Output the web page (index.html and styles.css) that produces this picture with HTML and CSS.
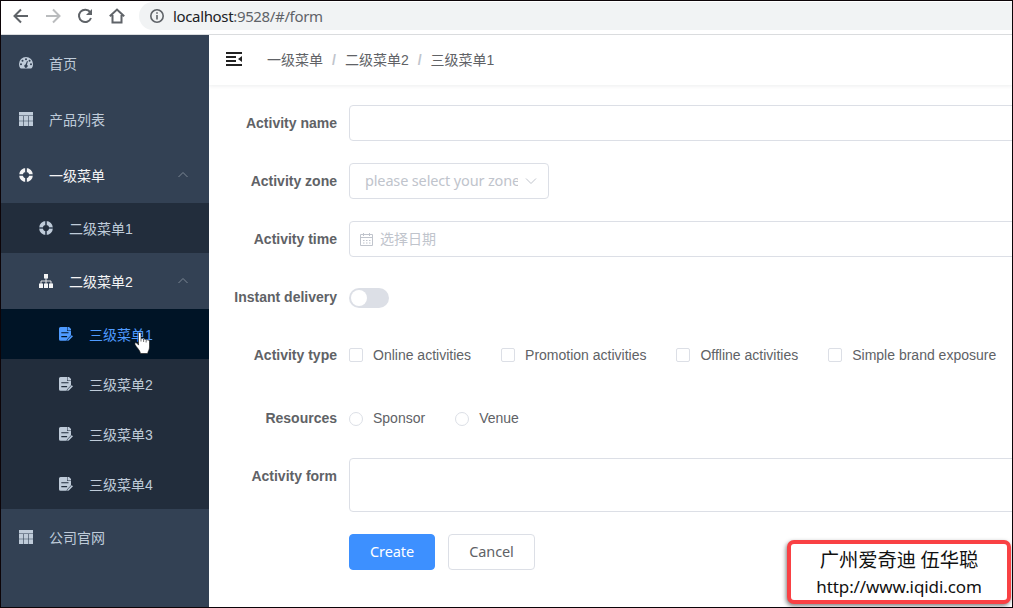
FILE: index.html
```html
<!DOCTYPE html>
<html lang="zh-CN">
<head>
    <meta charset="UTF-8">
    <meta name="viewport" content="width=device-width, initial-scale=1.0">
    <title>三级菜单1</title>
    <link rel="stylesheet" href="styles.css">
</head>
<body>

<!-- Icons -->
<svg class="icon-defs" width="0" height="0">
    <symbol id="icon-dashboard" viewBox="0 0 14 14">
        <path fill="currentColor" fill-rule="evenodd" d="M7 1a7 7 0 0 0-7 7c0 1.500.4 2.900 1.100 4.100.2.300.5.500.9.500h10c.4 0 .7-.2.900-.5A7.500 7.500 0 0 0 14 8a7 7 0 0 0-7-7zM2 7.200a1 1 0 1 1 0 2 1 1 0 0 1 0-2zM3.500 3.700a1 1 0 1 1 0 2 1 1 0 0 1 0-2zM7 2.200a1 1 0 1 1 0 2 1 1 0 0 1 0-2zM8 5l.9.300-1 3.500a1.600 1.600 0 1 1-1.400-.2zM10.600 3.700a1 1 0 1 1 0 2 1 1 0 0 1 0-2zM12 7.200a1 1 0 1 1 0 2 1 1 0 0 1 0-2z"/>
    </symbol>
    <symbol id="icon-table" viewBox="0 0 14 14">
        <path fill="currentColor" d="M0 0h14v3.500H0zM0 4h4.400v4.700H0zM5 4h4v4.700H5zM9.600 4H14v4.700H9.600zM0 9.200h4.400V14H0zM5 9.200h4V14H5zM9.600 9.200H14V14H9.600z"/>
    </symbol>
    <symbol id="icon-guide" viewBox="0 0 14 14">
        <circle cx="7" cy="7" r="5" fill="none" stroke="currentColor" stroke-width="3.800"/>
        <path class="guide-gap" d="M7 0v4M7 10v4M0 7h4M10 7h4"/>
    </symbol>
    <symbol id="icon-tree" viewBox="0 0 14 14">
        <path fill="currentColor" d="M5 0h4v4.500H5zM0 9.500h4V14H0zM5 9.500h4V14H5zM10 9.500h4V14h-4z"/>
        <path fill="none" stroke="currentColor" stroke-width=".9" d="M7 4v6M2 10V7h10v3"/>
    </symbol>
    <symbol id="icon-form" viewBox="0 0 14 14">
        <path fill="currentColor" fill-rule="evenodd" d="M1.500 0H8v4h4v4.300L8 12.600l-.4 1.200H1.500A1.500 1.500 0 0 1 0 12.300V1.500A1.500 1.500 0 0 1 1.500 0zM2.300 5.200v1h7.200v-1zM2.300 9v1.200h5.800V9z"/>
        <path fill="currentColor" d="M8.500 0H10l2 2v1.500H8.500zM12.700 8.200l1.300 1-4.200 4.400-1.600.4.400-1.500z"/>
    </symbol>
    <symbol id="icon-arrow-up" viewBox="0 0 12 12">
        <path fill="none" stroke="currentColor" d="M1.500 8L6 3.500 10.500 8"/>
    </symbol>
</svg>

<div class="window">
    <!-- Browser bar -->
    <div class="browser-bar">
        <svg class="browser-icon" viewBox="0 0 16 16"><path d="M15 8H2M8 1.500L1.500 8 8 14.500"/></svg>
        <svg class="browser-icon disabled" viewBox="0 0 16 16"><path d="M1 8h13M8 1.500L14.500 8 8 14.500"/></svg>
        <svg class="browser-icon" viewBox="0 0 16 16"><path d="M13.200 4.200A6.200 6.200 0 1 0 14 10"/><path class="solid" d="M15 1v6H9z"/></svg>
        <svg class="browser-icon" viewBox="0 0 16 16"><path d="M.8 8.200L8 1.500l7.200 6.700M3.500 7v7.500h9V7"/></svg>
        <div class="address">
            <svg class="info-icon" viewBox="0 0 14 14"><circle cx="7" cy="7" r="6.200"/><path d="M7 6v4.500M7 3.300v1.500"/></svg>
            <span class="host">localhost</span><span>:9528/#/form</span>
        </div>
    </div>

    <div class="app">
        <!-- Sidebar -->
        <div class="sidebar">
            <a class="menu-item"><svg class="menu-icon"><use href="#icon-dashboard"/></svg><span>首页</span></a>
            <a class="menu-item"><svg class="menu-icon"><use href="#icon-table"/></svg><span>产品列表</span></a>
            <a class="menu-item opened"><svg class="menu-icon"><use href="#icon-guide"/></svg><span>一级菜单</span><svg class="arrow"><use href="#icon-arrow-up"/></svg></a>
            <div class="submenu">
                <a class="menu-item level-2"><svg class="menu-icon"><use href="#icon-guide"/></svg><span>二级菜单1</span></a>
                <a class="menu-item level-2 opened"><svg class="menu-icon"><use href="#icon-tree"/></svg><span>二级菜单2</span><svg class="arrow"><use href="#icon-arrow-up"/></svg></a>
                <a class="menu-item level-3 active"><svg class="menu-icon"><use href="#icon-form"/></svg><span>三级菜单1</span></a>
                <a class="menu-item level-3"><svg class="menu-icon"><use href="#icon-form"/></svg><span>三级菜单2</span></a>
                <a class="menu-item level-3"><svg class="menu-icon"><use href="#icon-form"/></svg><span>三级菜单3</span></a>
                <a class="menu-item level-3"><svg class="menu-icon"><use href="#icon-form"/></svg><span>三级菜单4</span></a>
            </div>
            <a class="menu-item"><svg class="menu-icon"><use href="#icon-table"/></svg><span>公司官网</span></a>
        </div>

        <div class="main">
            <!-- Navbar -->
            <div class="navbar">
                <svg class="hamburger" viewBox="0 0 16 14"><path d="M0 0h16v2H0zM0 4h10v2H0zM0 8h10v2H0zM0 12h16v2H0zM16 4v6l-4-3z"/></svg>
                <div class="breadcrumb">
                    <span>一级菜单</span><i>/</i><span>二级菜单2</span><i>/</i><span>三级菜单1</span>
                </div>
            </div>

            <!-- Form -->
            <div class="form">
                <div class="form-item">
                    <label>Activity name</label>
                    <div class="input"></div>
                </div>
                <div class="form-item">
                    <label>Activity zone</label>
                    <div class="input select"><span class="placeholder">please select your zone</span><svg class="select-arrow" viewBox="0 0 12 12"><path d="M1 3.500l5 5 5-5"/></svg></div>
                </div>
                <div class="form-item">
                    <label>Activity time</label>
                    <div class="input date">
                        <svg class="calendar" viewBox="0 0 13 13"><path d="M.5 1.500h12v11H.5zM.5 4.500h12M3.500 0v3M9.500 0v3M3 7.500h1.500M6 7.500h1.500M9 7.500h1.500M3 10h1.500M6 10h1.500M9 10h1.500"/></svg>
                        <span>选择日期</span>
                    </div>
                </div>
                <div class="form-item">
                    <label>Instant delivery</label>
                    <div class="switch"><div class="knob"></div></div>
                </div>
                <div class="form-item type-item">
                    <label>Activity type</label>
                    <div class="options">
                        <span class="option"><i class="checkbox"></i>Online activities</span>
                        <span class="option"><i class="checkbox"></i>Promotion activities</span>
                        <span class="option"><i class="checkbox"></i>Offline activities</span>
                        <span class="option"><i class="checkbox"></i>Simple brand exposure</span>
                    </div>
                </div>
                <div class="form-item">
                    <label>Resources</label>
                    <div class="options">
                        <span class="option"><i class="radio"></i>Sponsor</span>
                        <span class="option"><i class="radio"></i>Venue</span>
                    </div>
                </div>
                <div class="form-item">
                    <label>Activity form</label>
                    <div class="input textarea"></div>
                </div>
                <div class="form-buttons">
                    <button class="btn primary">Create</button>
                    <button class="btn">Cancel</button>
                </div>
            </div>
        </div>
    </div>

    <!-- Mouse pointer over the active item -->
    <svg class="pointer" viewBox="0 0 17 23"><path d="M4.500 1.500c0-1.300 2.500-1.300 2.500 0V7c.4-1 2.500-.8 2.600.5.500-1 2.400-.7 2.500.7.600-.8 3.400-.4 3.400 1V15c0 3-1.500 4-1.800 6.500H6.500C6 18 2.500 15.500 1 12.500c-.7-1.600 1-2.300 2-1.200l1.500 1.800z"/><path class="folds" d="M7 7v2.500M9.600 7.500V10M12.100 8.500V10.500"/></svg>

    <!-- Signature -->
    <div class="signature">
        <div class="author">广州爱奇迪 伍华聪</div>
        <div class="site">http://www.iqidi.com</div>
    </div>
</div>

</body>
</html>
```
FILE: styles.css
```css
* {
    box-sizing: border-box;
}

body {
    margin: 0;
    font-family: "Liberation Sans", "Noto Sans CJK SC", sans-serif;
    font-size: 14px;
    color: #606266;
    background-color: #fff;
}

.icon-defs {
    display: block;
}

.window {
    position: relative;
    display: flex;
    flex-direction: column;
    width: 1013px;
    height: 608px;
    border: 1px solid #0c0408;
    overflow: hidden;
}

/* Browser bar */
.browser-bar {
    display: flex;
    align-items: center;
    flex: none;
    gap: 16px;
    height: 34px;
    padding: 0 0 3px 12px;
    border-bottom: 1px solid #dadcde;
}

.browser-icon {
    width: 16px;
    height: 16px;
    fill: none;
    stroke: #5f6368;
    stroke-width: 2;
}

.browser-icon.disabled {
    stroke: #babcbe;
}

.browser-icon .solid {
    fill: #5f6368;
    stroke: none;
}

.address {
    display: flex;
    align-items: center;
    flex: 1;
    height: 28px;
    margin-left: -2px;
    padding: 0 0 1px 11px;
    border-radius: 14px 0 0 14px;
    background-color: #f1f3f4;
    font-family: "Noto Sans", sans-serif;
    font-size: 15px;
    letter-spacing: -0.35px;
    color: #5f6368;
}

.address .host {
    color: #202124;
}

.info-icon {
    width: 14px;
    height: 14px;
    margin-right: 9px;
    fill: none;
    stroke: #5f6368;
    stroke-width: 1.6;
}

.app {
    display: flex;
    flex: 1;
    min-height: 0;
}

/* Sidebar */
.sidebar {
    flex: none;
    width: 208px;
    background-color: #334154;
}

.menu-item {
    display: flex;
    align-items: center;
    height: 56px;
    padding: 0 20px 0 18px;
    color: #bfcbd9;
    cursor: pointer;
}

.menu-item span {
    padding-bottom: 1px;
}

.menu-icon {
    flex: none;
    width: 14px;
    height: 14px;
    margin-right: 16px;
}

.guide-gap {
    stroke: #334154;
    stroke-width: 1.7;
}

.submenu {
    background-color: #222d3c;
}

.submenu .menu-item {
    height: 50px;
}

.submenu .level-2 {
    padding-left: 38px;
}

.submenu .level-3 {
    padding-left: 58px;
}

.submenu .opened {
    height: 56px;
    background-color: #334154;
}

.menu-item.opened {
    color: #f4f4f5;
}

.menu-item.active {
    color: #4f9bff;
    background-color: #001426;
}

.arrow {
    width: 12px;
    height: 12px;
    margin-left: auto;
    color: #7c8794;
}

/* Navbar */
.main {
    flex: 1;
    min-width: 0;
    overflow: hidden;
}

.navbar {
    display: flex;
    align-items: center;
    height: 50px;
    padding: 0 0 2px 17px;
    box-shadow: 0 1px 4px rgba(0, 21, 41, 0.08);
}

.hamburger {
    width: 16px;
    height: 14px;
    margin-right: 25px;
    fill: #222;
}

.breadcrumb i {
    margin: 0 9px;
    font-style: normal;
    font-weight: bold;
    color: #c0c4cc;
}

/* Form */
.form {
    width: 1000px;
    padding: 20px;
}

.form-item {
    display: flex;
    margin-bottom: 22px;
    min-height: 36px;
}

.form-item.type-item {
    margin-bottom: 27px;
}

.form-item label {
    flex: none;
    width: 120px;
    padding-right: 12px;
    text-align: right;
    font-weight: bold;
    line-height: 36px;
}

.input {
    display: flex;
    align-items: center;
    flex: 1;
    height: 36px;
    border: 1px solid #dcdfe6;
    border-radius: 4px;
    color: #c0c4cc;
}

.input.select {
    flex: none;
    width: 200px;
    padding: 0 11px 0 15px;
    font-family: "Noto Sans", sans-serif;
    font-size: 14.5px;
    letter-spacing: -0.15px;
}

.placeholder {
    width: 153px;
    padding-bottom: 2px;
    overflow: hidden;
    white-space: nowrap;
}

.select-arrow {
    width: 12px;
    height: 12px;
    margin-left: auto;
    fill: none;
    stroke: #c0c4cc;
}

.input.date {
    padding-left: 10px;
}

.input.date span {
    padding-bottom: 2px;
}

.calendar {
    width: 13px;
    height: 13px;
    margin-right: 7px;
    fill: none;
    stroke: #c0c4cc;
}

.input.textarea {
    height: 54px;
}

.switch {
    width: 40px;
    height: 20px;
    margin-top: 9px;
    padding: 2px;
    border-radius: 10px;
    background-color: #dcdfe6;
}

.knob {
    width: 16px;
    height: 16px;
    border-radius: 50%;
    background-color: #fff;
}

.options {
    display: flex;
    gap: 30px;
    height: 36px;
    white-space: nowrap;
}

.option {
    display: flex;
    align-items: center;
}

.checkbox, .radio {
    width: 14px;
    height: 14px;
    margin-right: 10px;
    border: 1px solid #dcdfe6;
    border-radius: 2px;
}

.radio {
    margin-top: 2px;
    border-radius: 50%;
}

.form-buttons {
    display: flex;
    gap: 13px;
    padding-left: 120px;
}

.btn {
    width: 87px;
    height: 36px;
    padding: 0 0 2px;
    border: 1px solid #dcdfe6;
    border-radius: 4px;
    background-color: #fff;
    color: #606266;
    font-family: "Noto Sans", sans-serif;
    font-size: 14.5px;
    letter-spacing: -0.1px;
}

.btn.primary {
    width: 86px;
    border-color: #3d90ff;
    background-color: #3d90ff;
    color: #fff;
}

.pointer {
    position: absolute;
    left: 133px;
    top: 331px;
    width: 17px;
    height: 23px;
    fill: #fff;
    stroke: #111;
    stroke-width: 0.6;
}

.pointer .folds {
    fill: none;
}

.signature {
    position: absolute;
    left: 786px;
    top: 539px;
    width: 224px;
    height: 64px;
    padding-top: 2px;
    border: 4px solid #f94144;
    border-radius: 7px;
    background-color: #fff;
    box-shadow: -1px 2px 4px rgba(0, 0, 0, 0.5);
    text-align: center;
    color: #111;
}

.author {
    font-family: "Noto Sans CJK SC", sans-serif;
    font-size: 19.3px;
    line-height: 27px;
}

.site {
    font-family: "Noto Sans", sans-serif;
    font-size: 17px;
    letter-spacing: -0.1px;
    line-height: 28px;
}
```
